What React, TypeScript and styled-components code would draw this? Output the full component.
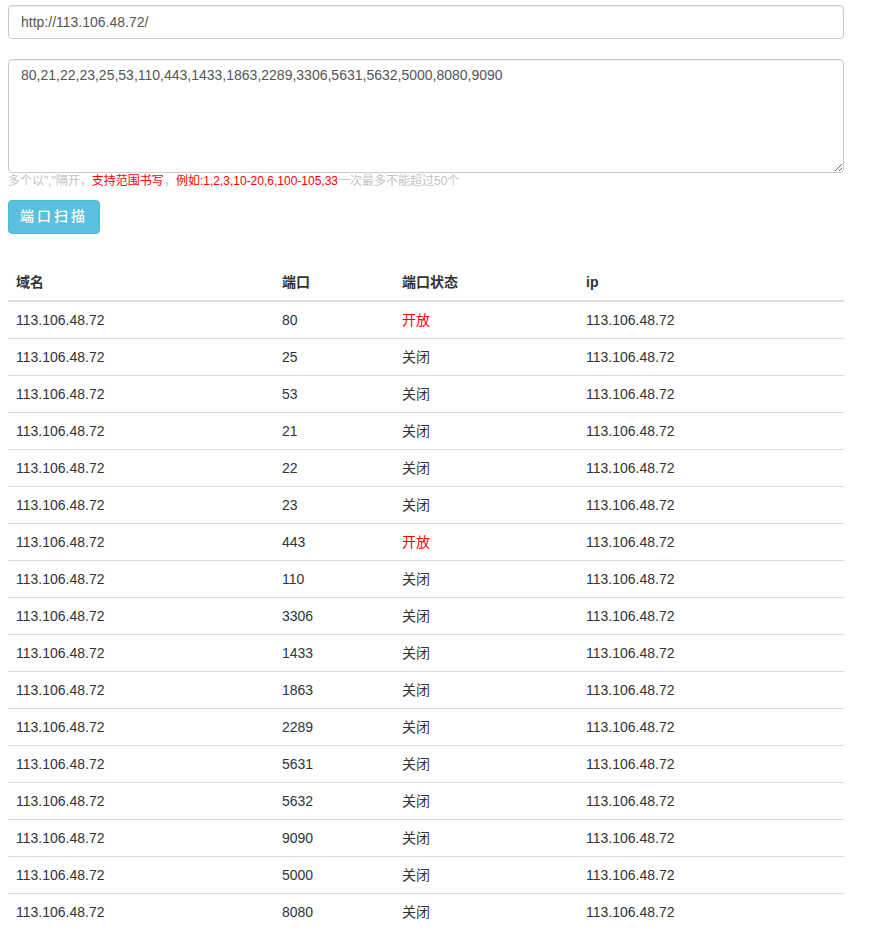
import React from "react";
import styled, { createGlobalStyle } from "styled-components";

const GlobalStyle = createGlobalStyle`
  * { box-sizing: border-box; }
  body {
    margin: 0;
    background: #fff;
    color: #333;
    font-family: "Liberation Sans", Arial, "Noto Sans CJK SC", sans-serif;
    font-size: 14px;
    line-height: 1.42857;
  }
`;

const Page = styled.div`
  width: 836px;
  margin: 0 0 0 8px;
  padding-top: 5px;
`;

const UrlInput = styled.input`
  display: block;
  width: 100%;
  height: 34px;
  padding: 6px 12px;
  font: inherit;
  color: #555;
  background: #fff;
  border: 1px solid #ccc;
  border-radius: 4px;
  box-shadow: inset 0 1px 1px rgba(0, 0, 0, 0.075);
  outline: none;
`;

const PortArea = styled.textarea`
  display: block;
  width: 100%;
  height: 114px;
  margin-top: 20px;
  padding: 6px 12px;
  font: inherit;
  color: #555;
  background: #fff;
  border: 1px solid #ccc;
  border-radius: 4px;
  box-shadow: inset 0 1px 1px rgba(0, 0, 0, 0.075);
  outline: none;
  resize: vertical;
`;

const Help = styled.div`
  font-size: 12px;
  line-height: 17px;
  color: #c4c4c4;
  margin-top: 0;
`;

const Red = styled.span`
  color: #f00;
`;

const ScanButton = styled.button`
  display: block;
  margin-top: 10px;
  height: 34px;
  padding: 6px 11px;
  font: inherit;
  font-size: 14px;
  font-weight: 500;
  letter-spacing: 3px;
  color: #fff;
  background: #5bc0de;
  border: 1px solid #46b8da;
  border-radius: 4px;
  cursor: pointer;
`;

const Table = styled.table`
  width: 100%;
  margin-top: 30px;
  border-collapse: collapse;
  border-spacing: 0;
`;

const Th = styled.th<{ $w: number }>`
  width: ${(p) => p.$w}px;
  padding: 8px;
  text-align: left;
  font-weight: bold;
  line-height: 20px;
  border-bottom: 2px solid #ddd;
`;

const Td = styled.td<{ $open?: boolean }>`
  padding: 8px;
  line-height: 20px;
  color: ${(p) => (p.$open ? "#f00" : "#333")};
`;

const Row = styled.tr`
  & + & td {
    border-top: 1px solid #ddd;
  }
`;

const host = "113.106.48.72";
const rows: [string, boolean][] = [
  ["80", true],
  ["25", false],
  ["53", false],
  ["21", false],
  ["22", false],
  ["23", false],
  ["443", true],
  ["110", false],
  ["3306", false],
  ["1433", false],
  ["1863", false],
  ["2289", false],
  ["5631", false],
  ["5632", false],
  ["9090", false],
  ["5000", false],
  ["8080", false],
];

export default function App() {
  return (
    <Page>
      <GlobalStyle />
      <UrlInput defaultValue="http://113.106.48.72/" />
      <PortArea defaultValue="80,21,22,23,25,53,110,443,1433,1863,2289,3306,5631,5632,5000,8080,9090" />
      <Help>
        多个以","隔开，<Red>支持范围书写</Red>，<Red>例如:1,2,3,10-20,6,100-105,33</Red>一次最多不能超过50个
      </Help>
      <ScanButton>端口扫描</ScanButton>
      <Table>
        <thead>
          <tr>
            <Th $w={266}>域名</Th>
            <Th $w={120}>端口</Th>
            <Th $w={184}>端口状态</Th>
            <Th $w={266}>ip</Th>
          </tr>
        </thead>
        <tbody>
          {rows.map(([port, open], i) => (
            <Row key={i}>
              <Td>{host}</Td>
              <Td>{port}</Td>
              <Td $open={open}>{open ? "开放" : "关闭"}</Td>
              <Td>{host}</Td>
            </Row>
          ))}
        </tbody>
      </Table>
    </Page>
  );
}
